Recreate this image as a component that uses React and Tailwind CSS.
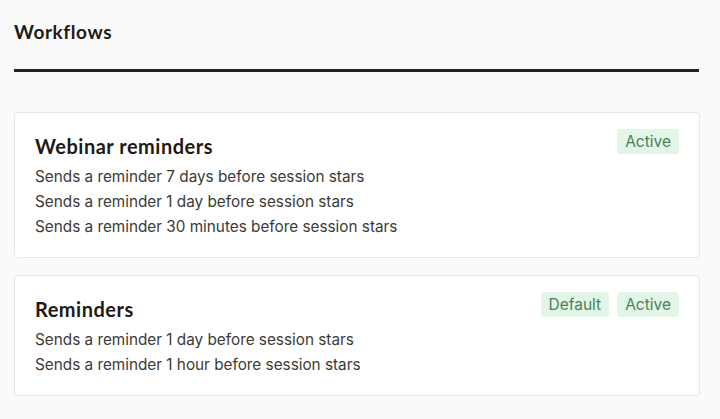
import React from 'react';

const WORKFLOWS = [
  {
    name: 'Webinar reminders',
    badges: ['Active'],
    steps: [
      'Sends a reminder 7 days before session stars',
      'Sends a reminder 1 day before session stars',
      'Sends a reminder 30 minutes before session stars',
    ],
  },
  {
    name: 'Reminders',
    badges: ['Default', 'Active'],
    steps: [
      'Sends a reminder 1 day before session stars',
      'Sends a reminder 1 hour before session stars',
    ],
  },
];

const headFont = { fontFamily: '"Lato", "Noto Sans", sans-serif' };

function Badge({ label }) {
  return (
    <span className="rounded-[4px] bg-[#e1f6e7] px-2 h-[25px] flex items-center text-[15.5px] text-[#4f7d5e]" style={{ fontFamily: 'Inter, sans-serif' }}>
      {label}
    </span>
  );
}

function WorkflowCard({ workflow }) {
  return (
    <div className="bg-white border border-[#e6e6e6] rounded-[4px] px-5 pt-4 pb-[18px]">
      <div className="flex items-start justify-between">
        <h2 className="mt-[3px] text-[20px] leading-[28px] font-bold text-[#1e1a15] tracking-[0.5px]" style={headFont}>
          {workflow.name}
        </h2>
        <div className="flex gap-2">
          {workflow.badges.map(b => <Badge key={b} label={b} />)}
        </div>
      </div>
      <div className="mt-1 flex flex-col">
        {workflow.steps.map((s, i) => (
          <p key={i} className="text-[15.3px] leading-[25px] text-[#3b3a38]" style={{ fontFamily: 'Inter, sans-serif' }}>
            {s}
          </p>
        ))}
      </div>
    </div>
  );
}

export default function App() {
  return (
    <div className="min-h-screen w-[720px] bg-[#fafafa] px-[14px] pt-[20px] pb-6">
      <h1 className="text-[19px] leading-[24px] font-bold text-[#1e1a15] tracking-[0.6px] pb-[25px] border-b-[3px] border-[#2a2218] mr-[7px]" style={headFont}>
        Workflows
      </h1>
      <div className="mt-[40px] flex flex-col gap-[17px] mr-[6px]">
        {WORKFLOWS.map(w => <WorkflowCard key={w.name} workflow={w} />)}
      </div>
    </div>
  );
}
